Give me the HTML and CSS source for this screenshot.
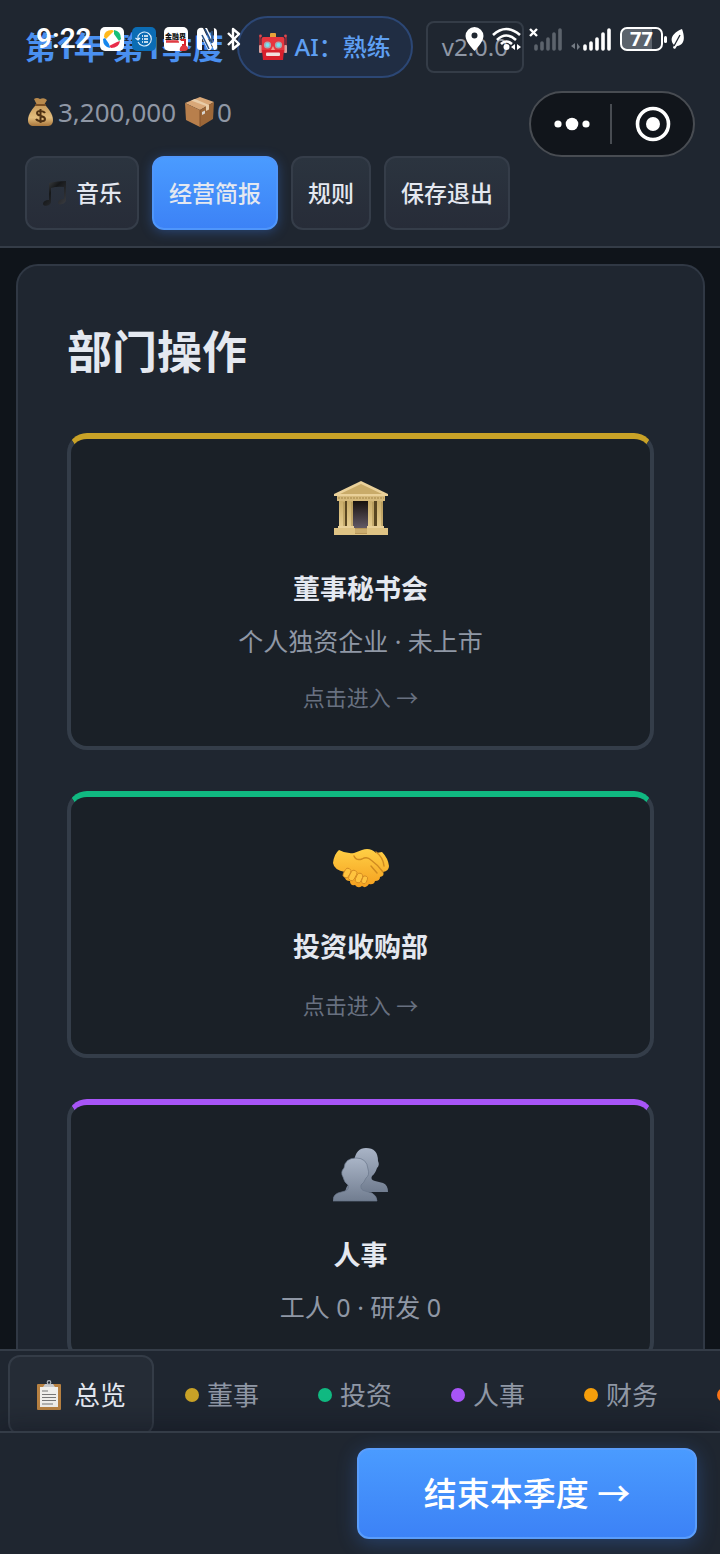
FILE: index.html
```html
<!DOCTYPE html>
<html lang="zh-CN">
<head>
<meta charset="utf-8">
<meta name="viewport" content="width=device-width, initial-scale=1">
<title>部门操作</title>
<link rel="stylesheet" href="styles.css">
</head>
<body>
<header class="topbar">
  <div class="row-info">
    <span class="period">第1年 第1季度</span>
    <span class="ai-pill">
      <svg width="28" height="28" viewBox="0 0 28 28" aria-hidden="true">
        <path d="M1 4v10M27 4v10" stroke="#a92b35" stroke-width="1.4"/><circle cx="1.5" cy="3" r="1.4" fill="#e0474c"/><circle cx="26.5" cy="3" r="1.4" fill="#e0474c"/>
        <rect x="11" y="0" width="6" height="5" rx="1" fill="#e8a33a"/><rect x="0" y="12" width="3" height="8" rx="1" fill="#d9a09c"/><rect x="25" y="12" width="3" height="8" rx="1" fill="#d9a09c"/>
        <rect x="2.500" y="4" width="23" height="16" rx="2" fill="#e8363e"/><path d="M3 17h22l-1 10H4z" fill="#d81f2c"/>
        <circle cx="8.500" cy="12" r="3.600" fill="#a8aab0"/><circle cx="19.500" cy="12" r="3.600" fill="#a8aab0"/><circle cx="8.500" cy="12" r="2" fill="#75e5f3"/><circle cx="19.500" cy="12" r="2" fill="#75e5f3"/>
        <path d="M14 13l-2 4h4z" fill="#f29b8c"/><rect x="7" y="19.500" width="14" height="3.500" rx="1" fill="#f1dede"/>
      </svg>
      <span>AI：熟练</span>
    </span>
    <span class="version">v2.0.0</span>
  </div>
  <div class="row-assets">
    <span class="asset">
      <svg width="29" height="30" viewBox="0 0 29 30" aria-hidden="true">
        <defs><linearGradient id="bag" x2="0" y2="1"><stop stop-color="#c79a5b"/><stop offset=".6" stop-color="#e3bd7d"/><stop offset="1" stop-color="#a8763c"/></linearGradient></defs>
        <path d="M8 2q3-2 6 0q4-2 7 1l-3 5h-7z" fill="#b98a4d"/><path d="M10 8h9c3 3 8 9 8 15 0 5-3 6-6 6H8c-4 0-6-2-6-6C2 17 7 11 10 8z" fill="url(#bag)"/><path d="M10 8h9" stroke="#7a4f24" stroke-width="2" stroke-linecap="round"/>
        <path d="M19 16c-1-2-8-3-8 0 0 4 8 2 8 6 0 3-7 3-9 0M14.500 12v14" fill="none" stroke="#4d3013" stroke-width="2"/>
      </svg>
      <span>3,200,000</span>
    </span>
    <span class="asset">
      <svg width="29" height="30" viewBox="0 0 29 30" aria-hidden="true">
        <path d="M0 6L15 0l14 5-14 8z" fill="#d9a878"/><path d="M0 6l15 7v17L1 23z" fill="#b87f4c"/><path d="M15 13l14-8-1 17-13 8z" fill="#9c6738"/><path d="M6 3.500L21 9v5l3-1.500V8L10 2z" fill="#e9cda8"/><path d="M15 13v17" stroke="#83522a"/><path d="M17 15l3-1.500v3L17 18z" fill="#d8d5d0"/>
      </svg>
      <span>0</span>
    </span>
  </div>
  <div class="row-actions">
    <button class="btn" type="button">
      <svg width="26" height="26" viewBox="0 0 26 26" aria-hidden="true"><defs><linearGradient id="note" x2="1" y2="1"><stop stop-color="#4a4d50"/><stop offset=".4" stop-color="#16181a"/><stop offset="1" stop-color="#3b3d42"/></linearGradient></defs><path d="M7 3Q15 1 24 1v19c0 4-8 6-8 3 0-2 2-4 6-4V7q-7-1-13 1v14c0 4-8 5-8 2 0-2 2-4 6-4z" fill="url(#note)"/></svg>
      <span>音乐</span>
    </button>
    <button class="btn btn-primary" type="button">经营简报</button>
    <button class="btn" type="button">规则</button>
    <button class="btn" type="button">保存退出</button>
  </div>

  <div class="status status-left">
    <span class="clock">9:22</span>
    <svg width="24" height="24" viewBox="0 0 24 24" aria-hidden="true"><rect width="24" height="24" rx="5" fill="#fff"/><path d="M4 10Q4 3 12 3l2 1-8 8z" fill="#ffb81c"/><path d="M14 3q7 1 7 9l-2 2-5-7z" fill="#16bf78"/><path d="M20 14q-1 7-9 7l-2-2 8-4z" fill="#e92b49"/><path d="M10 21q-7-1-7-9l2-1 4 6z" fill="#1687ed"/></svg>
    <svg width="24" height="24" viewBox="0 0 24 24" aria-hidden="true"><rect width="24" height="24" rx="5" fill="#0b6cb4"/><path d="M6 15a7 7 0 1 0 0-6v4M3.500 11l2.500 2 2-2" fill="none" stroke="#e5f3ff" stroke-width="1.100"/><path d="M10 9h1m1 0h4M10 12h1m1 0h4M10 15h1m1 0h4" stroke="#fff" stroke-width="1.300"/></svg>
    <svg width="24" height="24" viewBox="0 0 24 24" role="img" aria-label="金融界"><rect width="24" height="24" rx="5" fill="#fff"/><text x="1" y="12" class="app-label">金融界</text><path d="M2 15h13M2 14h12" stroke="#e03b42" stroke-width="1.300"/><path d="M17 13h4v5h-3" fill="none" stroke="#d9232b" stroke-width="2"/><path d="M16 24a4 4 0 0 1 8-3q0 3-4 3z" fill="#e03b42"/></svg>
    <svg width="22" height="24" viewBox="0 0 22 24" aria-hidden="true"><path d="M9 1h8a4 4 0 0 1 4 4v14a3 3 0 0 1-3 4zM2 2q2-2 5-1l9 19q-1 4-4 3L6 11v12H4a3 3 0 0 1-3-3V5q0-2 1-3zM11 1l7 15V1z" fill="#fff"/><path d="M6 8l7 14M9 2l7 14V4" fill="none" stroke="#2b5285" stroke-width="1.600"/></svg>
    <svg width="16" height="24" viewBox="0 0 16 24" aria-hidden="true"><path d="M2 6l11 11-6 5V2l6 5L2 18" fill="none" stroke="#fff" stroke-width="2.400" stroke-linejoin="round"/></svg>
  </div>
  <div class="status status-right">
    <svg width="19" height="24" viewBox="0 0 19 24" aria-hidden="true"><path fill-rule="evenodd" d="M9.500 0A9 9 0 0 1 18.500 9c0 6-9 15-9 15S.5 15 .5 9a9 9 0 0 1 9-9zm0 5.500a3 3 0 1 0 0 6 3 3 0 0 0 0-6z" fill="#fff"/></svg>
    <svg width="29" height="24" viewBox="0 0 29 24" aria-hidden="true"><path d="M1 8q13-12 27 0M5 13q9-9 19 0M9 17q5-5 11 0" fill="none" stroke="#fff" stroke-width="2.600"/><circle cx="14.500" cy="20" r="3" fill="#fff"/><path d="M23 17v6l-4-3zM25 17v6l4-3z" fill="#fff"/></svg>
    <svg width="34" height="24" viewBox="0 0 34 24" aria-hidden="true"><path d="M1 2l7 7M8 2L1 9" stroke="#fff" stroke-width="2.400"/><path d="M7 22v-3M13 22v-6M19 22V12M25 22V7M31 22V3" stroke="#5c636c" stroke-width="3.600" stroke-linecap="round"/></svg>
    <svg width="41" height="24" viewBox="0 0 41 24" aria-hidden="true"><path d="M4 16v6l-4-3zM6 16v7l3-3" fill="#747b84"/><path d="M14 22v-3M20 22v-6M26 22V12M32 22V7M38 22V3" stroke="#fff" stroke-width="3.600" stroke-linecap="round"/></svg>
    <span class="battery">77</span>
    <svg class="leaf" width="13" height="20" viewBox="0 0 13 20" aria-hidden="true"><path d="M11 0c3 8 3 16-5 17l-2 3-2-1 1-3C-2 11 1 4 11 0z" fill="#fff"/><path d="M3 17L9 6" stroke="#202731" stroke-width="1.300"/></svg>
  </div>
  <div class="capsule">
    <button class="capsule-btn" type="button" aria-label="更多">
      <svg width="36" height="14" viewBox="0 0 36 14" aria-hidden="true"><g fill="#fff"><circle cx="4" cy="7" r="3.600"/><circle cx="18" cy="7" r="6.300"/><circle cx="32" cy="7" r="3.600"/></g></svg>
    </button>
    <button class="capsule-btn" type="button" aria-label="关闭">
      <svg width="36" height="36" viewBox="0 0 36 36" aria-hidden="true"><circle cx="18" cy="18" r="15.500" fill="none" stroke="#fff" stroke-width="3.600"/><circle cx="18" cy="18" r="7" fill="#fff"/></svg>
    </button>
  </div>
</header>

<main class="content">
  <section class="panel">
    <h1 class="panel-title">部门操作</h1>
    <div class="cards">
      <a class="card card-board" href="#board">
        <svg class="card-icon" width="56" height="56" viewBox="0 0 56 56" aria-hidden="true">
          <defs><linearGradient id="stone" x2="0" y2="1"><stop stop-color="#c9ad6a"/><stop offset="1" stop-color="#e8cf92"/></linearGradient><linearGradient id="hall" x2="0" y2="1"><stop stop-color="#17110e"/><stop offset="1" stop-color="#655c69"/></linearGradient></defs>
          <rect x="7" y="18" width="42" height="30" fill="#594621"/><rect x="20" y="20" width="16" height="28" fill="url(#hall)"/>
          <path d="M1 13L28 0l27 13v2H1z" fill="#ead19a"/><path d="M7 13l21-10 21 10z" fill="#c9ab69"/><path d="M4 15h48v5H4z" fill="#d6ba7c"/><path d="M5 17h46" stroke="#a48648" stroke-dasharray="2 1"/>
          <path d="M6 20h6v27H6zM14 20h6v27h-6zM35 20h6v27h-6zM44 20h6v27h-6z" fill="url(#stone)"/><path d="M11 21v25M19 21v25M40 21v25M49 21v25" stroke="#a98d50"/>
          <path d="M5 45h16v3H5zM34 45h17v3H34z" fill="#ead19a"/><path d="M1 47h54v7H1z" fill="#dfc384"/><path d="M22 47h12v6H22z" fill="#b79659"/><path d="M22 49h12M22 51h12" stroke="#dcc083"/>
        </svg>
        <h2 class="card-title">董事秘书会</h2>
        <p class="card-sub">个人独资企业 · 未上市</p>
        <p class="card-link">点击进入 →</p>
      </a>
      <a class="card card-invest" href="#invest">
        <svg class="card-icon" width="56" height="56" viewBox="0 -2 56 56" aria-hidden="true">
          <defs><linearGradient id="hand" x2="0" y2="1"><stop stop-color="#ffcf45"/><stop offset="1" stop-color="#f5a01f"/></linearGradient></defs>
          <path d="M6 9q7 4 15 3l8-3q8-3 14 3l6-1q6 6 7 14 0 5-6 6 2 4-3 5 0 4-5 4-1 4-6 3-3 5-7 2-4 3-7-1-5 1-5-4-5 0-5-4-3-2 0-5Q1 29 0 22q1-9 6-13z" fill="url(#hand)"/>
          <path d="M21 15q2 5 8 3 5-3 9 1 7 5 12 12M38 25l6 7M43 11q7 5 8 14" fill="none" stroke="#cf8a20" stroke-width="1.400" stroke-linecap="round"/>
          <g fill="#ffc33e" stroke="#cf8420" stroke-width=".8"><rect x="11" y="27" width="6" height="10" rx="3" transform="rotate(28 14 32)"/><rect x="17" y="29" width="6" height="11" rx="3" transform="rotate(28 20 34)"/><rect x="23" y="32" width="6" height="10" rx="3" transform="rotate(24 26 37)"/><rect x="29" y="35" width="5" height="8" rx="2.500" transform="rotate(22 32 39)"/></g>
        </svg>
        <h2 class="card-title">投资收购部</h2>
        <p class="card-link">点击进入 →</p>
      </a>
      <a class="card card-hr" href="#hr">
        <svg class="card-icon" width="56" height="56" viewBox="0 -1 56 56" aria-hidden="true">
          <defs><linearGradient id="bust" x2="0" y2="1"><stop stop-color="#a9b4c6"/><stop offset="1" stop-color="#717d90"/></linearGradient></defs>
          <path d="M21 13Q23 0 33 0q12 0 12 13 2 4-1 7-2 6-5 8-2 4 3 5l8 2q5 2 5 9H12q1-8 10-10z" fill="url(#bust)"/>
          <path d="M11 20q1-10 12-10t12 11q2 6-2 9-2 5-5 7-1 5 4 6l7 2q5 3 5 8H0q0-6 5-8l7-2q5-2 3-6-4-3-5-8-3-5 1-9z" fill="url(#bust)" stroke="#69768a" stroke-width=".7"/>
        </svg>
        <h2 class="card-title">人事</h2>
        <p class="card-sub">工人 0 · 研发 0</p>
      </a>
    </div>
  </section>
</main>

<nav class="tabs">
  <a class="tab tab-active" href="#overview">
    <svg width="26" height="30" viewBox="0 0 26 30" aria-hidden="true"><rect x="1" y="4" width="24" height="26" rx="1" fill="#b78142"/><path d="M4 7h18v20H4z" fill="#efeeeb"/><path d="M7 7l2-3h8l2 3z" fill="#c7c9cc"/><circle cx="13" cy="2.500" r="1.800" fill="none" stroke="#aeb3ba" stroke-width="1.200"/><path d="M6 11h6M6 14.500h14M6 17.500h14M6 20.500h14M6 24h11" stroke="#777" stroke-width="1.100"/></svg>
    <span>总览</span>
  </a>
  <a class="tab" href="#board"><i class="dot dot-board"></i><span>董事</span></a>
  <a class="tab" href="#invest"><i class="dot dot-invest"></i><span>投资</span></a>
  <a class="tab" href="#hr"><i class="dot dot-hr"></i><span>人事</span></a>
  <a class="tab" href="#finance"><i class="dot dot-finance"></i><span>财务</span></a>
  <a class="tab" href="#more" aria-label="更多部门"><i class="dot dot-more"></i></a>
</nav>

<footer class="footer">
  <button class="end-turn" type="button">结束本季度 →</button>
</footer>
</body>
</html>
```

FILE: styles.css
```css
* { box-sizing: border-box; }

:root {
  --surface: #1f2630;
  --line: #343c47;
  --text: #e4e8f0;
  --muted: #8f97a5;
}

body {
  margin: 0;
  height: 100vh;
  display: flex;
  flex-direction: column;
  overflow: hidden;
  background: #0f141a;
  color: var(--text);
  font-family: "Noto Sans", "Noto Sans CJK SC", sans-serif;
}

svg { display: block; flex: none; }
a { color: inherit; text-decoration: none; }
h1, h2, p { margin: 0; }
button { font-family: inherit; }

/* Header */
.topbar {
  position: relative;
  flex: none;
  padding: 16px 25px;
  border-bottom: 2px solid var(--line);
  background: var(--surface);
}

.row-info {
  display: flex;
  align-items: center;
  gap: 13px;
}

.period {
  color: #4a90f0;
  font-size: 31px;
  line-height: 40px;
  font-weight: 700;
  white-space: nowrap;
}

.ai-pill {
  display: flex;
  align-items: center;
  gap: 8px;
  padding: 11px 20px;
  border: 2px solid #2c4775;
  border-radius: 31px;
  background: #202d43;
  color: #5e9ff2;
  font-size: 24px;
  line-height: 36px;
  font-weight: 500;
  white-space: nowrap;
}

.version {
  padding: 8px 14px;
  border: 2px solid var(--line);
  border-radius: 8px;
  color: var(--muted);
  font-size: 24px;
  line-height: 32px;
}

.row-assets {
  display: flex;
  gap: 9px;
  margin: 12px 0 22px;
  padding-left: 1px;
  color: var(--muted);
  font-size: 26px;
  line-height: 44px;
}

.asset {
  display: flex;
  align-items: center;
  gap: 3px;
}

.row-actions {
  display: flex;
  gap: 13px;
}

.btn {
  display: flex;
  align-items: center;
  justify-content: center;
  gap: 8px;
  padding: 18px 15px;
  border: 2px solid #353d49;
  border-radius: 12px;
  background: linear-gradient(#2b343f, #272c38);
  color: var(--text);
  font-size: 23px;
  line-height: 34px;
  font-weight: 500;
  white-space: nowrap;
}

.btn-primary {
  border-color: #4f96fb;
  background: linear-gradient(#4a9bff, #3c82f6);
  box-shadow: 0 2px 12px rgba(59, 130, 246, 0.35);
}

/* Device status and mini-program capsule, drawn over the header */
.status {
  position: absolute;
  top: 27px;
  display: flex;
  align-items: center;
  gap: 8px;
  height: 24px;
}

.status-left { left: 36px; }
.status-right { right: 36px; }

.clock {
  color: #fff;
  font-family: Roboto, sans-serif;
  font-size: 28px;
  line-height: 24px;
  font-weight: 600;
}

.app-label {
  font-size: 7px;
  font-weight: 900;
  fill: #111;
}

.battery {
  position: relative;
  width: 43px;
  border: 2px solid #fff;
  border-radius: 7px;
  background: linear-gradient(90deg, #5c636c 77%, #2b323c 77%);
  color: #fff;
  font-family: "Open Sans", sans-serif;
  font-size: 20px;
  line-height: 20px;
  font-weight: 700;
  text-align: center;
}

.battery::after {
  content: "";
  position: absolute;
  top: 7px;
  right: -6px;
  width: 3px;
  height: 7px;
  border-radius: 2px;
  background: #fff;
}

.capsule {
  position: absolute;
  top: 91px;
  right: 25px;
  display: flex;
  width: 166px;
  height: 66px;
  border: 2px solid #484c52;
  border-radius: 33px;
  background: #11151b;
}

.capsule-btn {
  display: grid;
  place-items: center;
  flex: 1;
  padding: 0;
  border: 0;
  background: linear-gradient(#484c52, #484c52) right / 2px 40px no-repeat;
}

.capsule-btn:last-child { background: none; }

/* Department panel */
.content {
  flex: 1;
  min-height: 0;
  overflow: hidden;
  padding: 16px 15px 0 16px;
}

.panel {
  padding: 49px;
  border: 2px solid #303844;
  border-radius: 22px;
  background: var(--surface);
}

.panel-title {
  margin-bottom: 44px;
  font-size: 45px;
  line-height: 74px;
  font-weight: 700;
}

.cards {
  display: flex;
  flex-direction: column;
  gap: 41px;
}

.card {
  display: flex;
  flex-direction: column;
  align-items: center;
  padding: 42px 20px 33px;
  border: 4px solid #343d49;
  border-top-width: 6px;
  border-radius: 20px;
  background: #1a2027;
  text-align: center;
}

.card-board { border-top-color: #c9a227; }
.card-invest { border-top-color: #10b981; }
.card-hr { border-top-color: #a855f7; }

.card-title {
  margin-top: 32px;
  font-size: 27px;
  line-height: 40px;
  font-weight: 700;
}

.card-sub {
  margin-top: 14px;
  color: var(--muted);
  font-size: 25px;
  line-height: 36px;
}

.card-link {
  margin-top: 22px;
  color: #687080;
  font-size: 22px;
  line-height: 32px;
}

/* Tabs */
.tabs {
  flex: none;
  display: flex;
  align-items: flex-start;
  gap: 3px;
  height: 82px;
  padding: 4px 0 0 8px;
  overflow: hidden;
  border-top: 2px solid var(--line);
  background: var(--surface);
}

.tab {
  flex: none;
  display: flex;
  align-items: center;
  gap: 8px;
  height: 80px;
  padding: 0 26px;
  border: 2px solid transparent;
  border-radius: 12px;
  color: var(--muted);
  font-size: 26px;
  line-height: 40px;
}

.tab-active {
  gap: 12px;
  border-color: var(--line);
  background: #252c36;
  color: var(--text);
}

.dot {
  width: 14px;
  height: 14px;
  border-radius: 50%;
}

.dot-board { background: #c9a227; }
.dot-invest { background: #10b981; }
.dot-hr { background: #a855f7; }
.dot-finance { background: #f59e0b; }
.dot-more { background: #f97316; }

/* Footer */
.footer {
  position: relative;
  flex: none;
  display: flex;
  justify-content: flex-end;
  padding: 15px 23px;
  border-top: 2px solid var(--line);
  background: var(--surface);
  box-shadow: 0 -4px 24px rgba(10, 12, 24, 0.4);
}

.end-turn {
  min-width: 340px;
  padding: 20px 24px;
  border: 2px solid #5a9dfb;
  border-radius: 12px;
  background: linear-gradient(#4a9bff, #3c82f6);
  box-shadow: 0 4px 20px rgba(59, 130, 246, 0.3);
  color: #fff;
  font-size: 33px;
  line-height: 47px;
  font-weight: 500;
}
```
